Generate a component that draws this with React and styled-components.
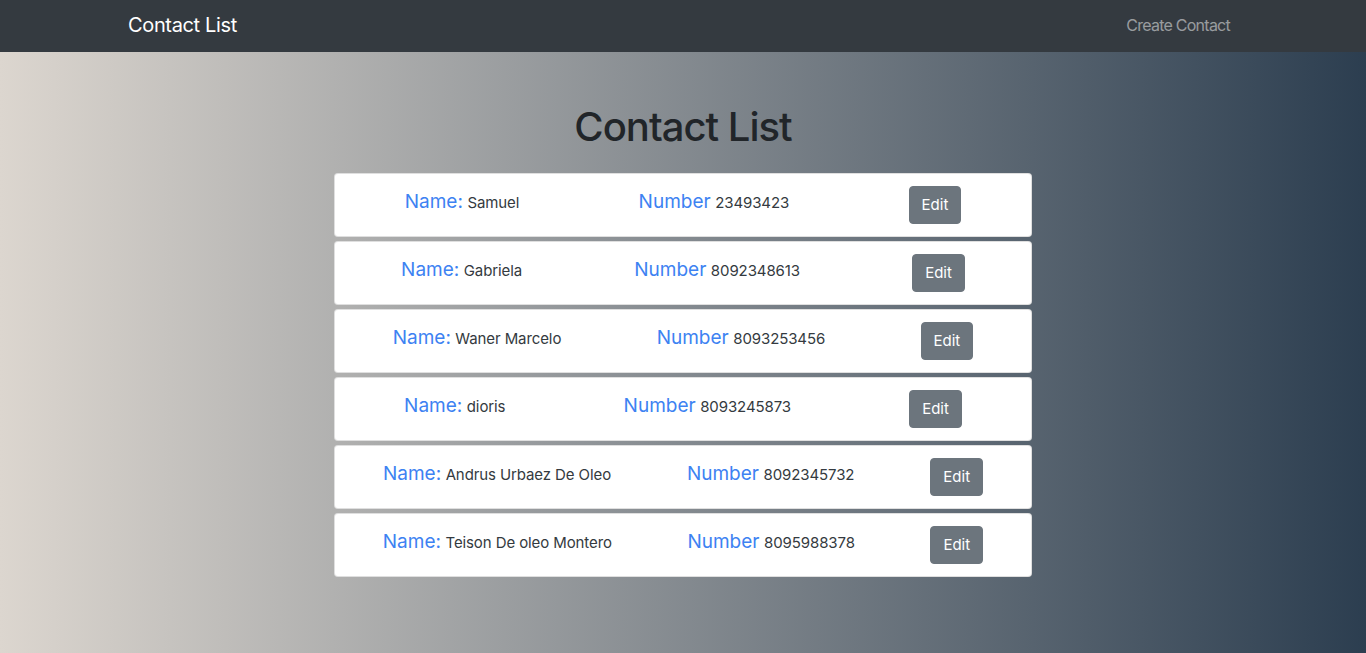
import React from "react";
import styled, { createGlobalStyle } from "styled-components";

const GlobalStyle = createGlobalStyle`
  * { box-sizing: border-box; }
  body {
    margin: 0;
    font-family: Inter, "Liberation Sans", Arial, sans-serif;
    color: #212529;
  }
`;

const NavBar = styled.nav`
  height: 52px;
  background: #343a40;
  display: flex;
  align-items: center;
`;

const NavInner = styled.div`
  width: 1140px;
  margin: 0 auto;
  padding: 0 15px;
  display: flex;
  align-items: center;
  justify-content: space-between;
`;

const Brand = styled.a`
  color: #fff;
  font-size: 20px;
  letter-spacing: -0.35px;
  line-height: 30px;
  text-decoration: none;
  margin-top: -2px;
`;

const NavLink = styled.a`
  color: rgba(255, 255, 255, 0.5);
  font-size: 16px;
  letter-spacing: -0.75px;
  padding: 8px;
  text-decoration: none;
  margin-top: -2px;
`;

const Main = styled.main`
  min-height: calc(100vh - 52px);
  background: linear-gradient(to right, #dcd6cf, #2c3e50);
  padding-top: 51px;
  padding-bottom: 40px;
`;

const Title = styled.h1`
  margin: 0 0 22px;
  text-align: center;
  font-size: 40px;
  letter-spacing: -1px;
  font-weight: 500;
  line-height: 48px;
  color: #212529;
`;

const List = styled.div`
  width: 698px;
  margin: 0 auto;
  display: flex;
  flex-direction: column;
  gap: 4px;
`;

const Card = styled.div`
  height: 64px;
  background: #fff;
  border: 1px solid rgba(0, 0, 0, 0.125);
  border-radius: 4px;
  padding: 0 10px;
  display: flex;
  align-items: center;
  justify-content: space-around;
`;

const Field = styled.div`
  margin-bottom: 8px;
  white-space: nowrap;
`;

const Label = styled.span`
  color: #3d82f2;
  font-size: 19px;
`;

const Value = styled.span`
  color: #343a40;
  font-size: 15px;
  letter-spacing: -0.1px;
`;

const EditButton = styled.button`
  font-family: inherit;
  font-size: 15px;
  line-height: 24px;
  color: #fff;
  background: #6c757d;
  border: 1px solid #6c757d;
  border-radius: 4px;
  padding: 6px 12px;
  cursor: pointer;
`;

const contacts = [
  { name: "Samuel", number: "23493423" },
  { name: "Gabriela", number: "8092348613" },
  { name: "Waner Marcelo", number: "8093253456" },
  { name: "dioris", number: "8093245873" },
  { name: "Andrus Urbaez De Oleo", number: "8092345732" },
  { name: "Teison De oleo Montero", number: "8095988378" },
];

export default function App() {
  return (
    <>
      <GlobalStyle />
      <NavBar>
        <NavInner>
          <Brand href="#">Contact List</Brand>
          <NavLink href="#">Create Contact</NavLink>
        </NavInner>
      </NavBar>
      <Main>
        <Title>Contact List</Title>
        <List>
          {contacts.map((c) => (
            <Card key={c.number}>
              <Field>
                <Label>Name:</Label> <Value>{c.name}</Value>
              </Field>
              <Field>
                <Label>Number</Label> <Value>{c.number}</Value>
              </Field>
              <EditButton>Edit</EditButton>
            </Card>
          ))}
        </List>
      </Main>
    </>
  );
}
